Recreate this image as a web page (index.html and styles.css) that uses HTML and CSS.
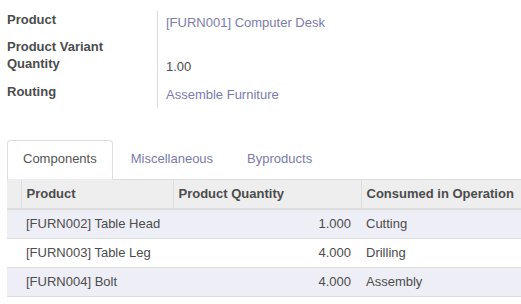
FILE: index.html
```html
<!DOCTYPE html>
<html>
<head>
<meta charset="utf-8">
<link rel="stylesheet" href="styles.css">
</head>
<body>
<div class="sheet">
  <div class="group">
    <div class="lbl">Product</div>
    <div class="val"><span class="link">[FURN001] Computer Desk</span></div>
    <div class="lbl">Product Variant</div>
    <div class="val"></div>
    <div class="lbl">Quantity</div>
    <div class="val">1.00</div>
    <div class="lbl">Routing</div>
    <div class="val"><span class="link">Assemble Furniture</span></div>
  </div>

  <div class="notebook">
    <ul class="tabs">
      <li class="tab active">Components</li>
      <li class="tab">Miscellaneous</li>
      <li class="tab">Byproducts</li>
    </ul>
    <table class="list">
      <colgroup>
        <col class="c0"><col class="c1"><col class="c2"><col class="c3">
      </colgroup>
      <thead>
        <tr>
          <th></th>
          <th>Product</th>
          <th>Product Quantity</th>
          <th>Consumed in Operation</th>
        </tr>
      </thead>
      <tbody>
        <tr class="odd">
          <td></td>
          <td>[FURN002] Table Head</td>
          <td class="num">1.000</td>
          <td>Cutting</td>
        </tr>
        <tr>
          <td></td>
          <td>[FURN003] Table Leg</td>
          <td class="num">4.000</td>
          <td>Drilling</td>
        </tr>
        <tr class="odd">
          <td></td>
          <td>[FURN004] Bolt</td>
          <td class="num">4.000</td>
          <td>Assembly</td>
        </tr>
      </tbody>
    </table>
  </div>
</div>
</body>
</html>
```

FILE: styles.css
```css
html, body {
  margin: 0;
  padding: 0;
  background: #ffffff;
  overflow: hidden;
}

body {
  font-family: "Liberation Sans", Arial, sans-serif;
  font-size: 13px;
  line-height: 17px;
  color: #4c4c4c;
}

.sheet {
  padding: 11px 0 0 7px;
}

.group {
  display: grid;
  grid-template-columns: 151px 1fr;
  grid-template-rows: 27px 17px 28px 25px;
}

.lbl {
  font-weight: bold;
  border-right: 1px solid #dcdcdc;
  color: #4c4c4c;
}

.val {
  padding: 3px 0 0 8px;
  color: #4c4c4c;
}

.link {
  color: #7c7bad;
}

.notebook {
  margin-top: 32px;
}

.tabs {
  list-style: none;
  margin: 0;
  padding: 0;
  display: flex;
  border-bottom: 1px solid #dddddd;
}

.tab {
  margin: 0 2px -1px 0;
  padding: 9px 15px 11px 15px;
  line-height: 18px;
  border: 1px solid transparent;
  border-radius: 4px 4px 0 0;
  color: #7c7bad;
}

.tab.active {
  color: #555555;
  background: #ffffff;
  border-color: #dddddd;
  border-bottom-color: #eeeeee;
}

.list {
  width: 100%;
  border-collapse: collapse;
  table-layout: fixed;
}

.c0 { width: 14px; }
.c1 { width: 152px; }
.c2 { width: 188px; }

.list th,
.list td {
  padding: 5px 5px;
  line-height: 18px;
  text-align: left;
  white-space: nowrap;
  overflow: hidden;
}

.list thead th {
  background: #eeeeee;
  font-weight: bold;
  color: #4c4c4c;
  border-left: 1px solid #dddddd;
  border-bottom: 2px solid #dddddd;
}

.list thead th:first-child {
  border-left: none;
}

.list tbody td {
  border-bottom: 1px solid #dddddd;
  color: #4c4c4c;
}

.list tbody td:nth-child(2) {
  padding-left: 5px;
}

.list tbody tr.odd td {
  background: #eeeef6;
}

.list td.num {
  text-align: right;
  padding-right: 10px;
}
```
